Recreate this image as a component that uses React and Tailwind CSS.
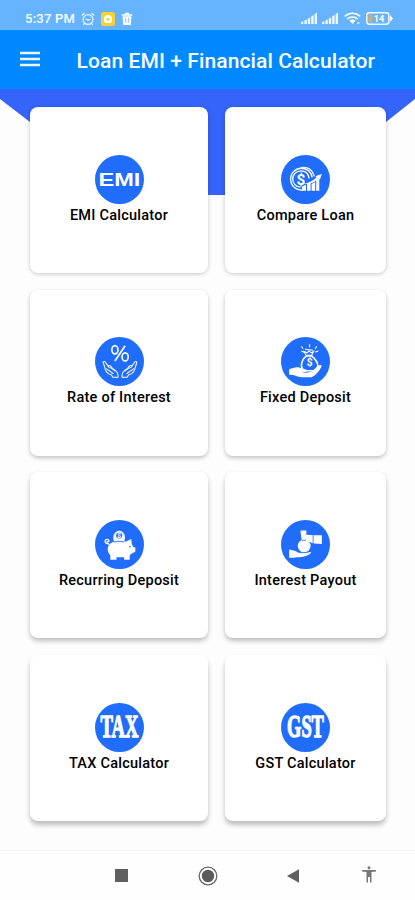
import React from 'react';

const Badge = ({ children }) => (
  <svg width="49" height="49" viewBox="0 0 48 48" className="block" fill="none">
    <circle cx="24" cy="24" r="24" fill="#216dfb" />
    {children}
  </svg>
);

const EmiIcon = () => (
  <Badge>
    <text x="3.500" y="30.300" fontSize="18.500" fontWeight="700" fill="#fff" fontFamily="'Liberation Sans', sans-serif" textLength="41" lengthAdjust="spacingAndGlyphs">EMI</text>
  </Badge>
);

const CompareIcon = () => (
  <Badge>
    <g stroke="#fff" strokeWidth="1.3">
      <path d="M21 34.5C14 34.5 9.500 30 9.500 23.500S14.500 13 20 13c6 0 10 4 10.500 9" />
      <path d="M19 31.500c-4.500-.5-7.500-3.800-7.500-8 0-4.500 3.500-8 8-8s7.500 3 8 7.500" />
      <path d="M19 13c2-1.500 11-2 13.500 8" />
    </g>
    <text x="19.500" y="29" fontSize="15" fontWeight="700" fill="#fff" textAnchor="middle" fontFamily="Roboto, sans-serif">$</text>
    <g fill="#fff">
      <path d="M20.500 35v-4l4-2v6zM25.500 35v-7l3.500-1.500V35zM30 35v-6.500l3.500-2V35zM34.500 35V24.500l3-2.500v13z" />
      <path d="M22 28c5-.5 10-3 13-6.500l-1.500-.8 6.500-2-2 5.500-1.200-1.200C33 27 28 29 22 28z" />
    </g>
  </Badge>
);

const RateIcon = () => (
  <Badge>
    <g stroke="#fff" strokeWidth="1.600">
      <ellipse cx="19.500" cy="12.500" rx="3" ry="4" />
      <ellipse cx="29.500" cy="19.500" rx="3" ry="4" />
      <path d="M29.500 8.500 19.500 23.500" />
    </g>
    <g stroke="#fff" strokeWidth="1" strokeLinejoin="round">
      <path d="M8 24.500c1.500-1 2.500 0 3 1.500l2.500 3.500 3 1.500c4 1.500 6 3.500 6 6.500v2h-5l-1.500-2.500c-3-.5-5-2.500-6-5.500z" />
      <path d="M12.500 28.500c2-1.500 3 0 4 1.500l3 3.500M11 31l7 5" />
      <path d="M41 24.500c-1.500-1-2.500 0-3 1.500l-2.500 3.500-3 1.500c-4 1.500-6 3.500-6 6.500v2h5l1.500-2.500c3-.5 5-2.500 6-5.500z" />
      <path d="M36.500 28.500c-2-1.500-3 0-4 1.500l-3 3.500M38 31l-7 5" />
    </g>
  </Badge>
);

const FixedIcon = () => (
  <Badge>
    <g stroke="#fff" strokeWidth="1">
      <path d="m20 9 1.500 2.500M28 7v3M35 9l-1.500 2.500M20 14l2.500 1M36.500 13.500l-3 1.500M23.500 12l8 1" />
      <path d="m24.500 18-2-4 3 1.500 2-2 2 2 2.500-1.500-2 4z" />
    </g>
    <path d="M25 18.500h5c3.500 3 6 6 6 9.500 0 3-2 4.500-4 5h-9c-2-1-3-2.500-3-5 0-3.500 2-7 5-9.500z" stroke="#fff" strokeWidth="1.500" />
    <text x="28.200" y="28.800" fontSize="10" fontWeight="700" fill="#fff" textAnchor="middle" fontFamily="Roboto, sans-serif">$</text>
    <path d="M8 31.500c3.500-1 6-2.500 9-1.800 2.500.7 3.500 2 6 2 2.500.1 3 2 1.500 2.500l-4 .2c4 1.300 8 .5 11-1.500l5-5c2-1 3.500-.5 3.200 1-1.700 4-5.200 8.100-9.700 10.600H20c-4-.5-7-3-12-2.500z" fill="#fff" />
  </Badge>
);

const PiggyIcon = () => (
  <Badge>
    <path d="M18.500 20.500c-1.800-5 1-10 5.200-10s7 5 5 10z" fill="#fff" />
    <circle cx="23.700" cy="15.300" r="3" fill="#216dfb" />
    <text x="23.700" y="17.600" fontSize="6.500" fontWeight="700" fill="#fff" textAnchor="middle" fontFamily="Roboto, sans-serif">$</text>
    <path d="M14 23.500c-3 .2-4.500-1.500-4-3.200.6-1.800 3.200-1.800 3.600-.3.300 1.400-1.400 2-2.100 1" stroke="#fff" strokeWidth="1.300" />
    <path d="M17.500 21.500c3.500-1.500 9.500-1.500 12.500-.2l5.500-2.800.5 5 1.500 3 2 .5v4l-3 1.500-2.500 2V39h-5.500v-2.500H21V39h-6v-4.500c-3.500-3.500-4-10 2.500-13z" fill="#fff" />
    <path d="M18.500 21.700c3-1.200 7-1.200 10 0" stroke="#216dfb" strokeWidth=".9" />
    <circle cx="34.300" cy="26.300" r=".8" fill="#216dfb" />
  </Badge>
);

const PayoutIcon = () => (
  <Badge>
    <g fill="#fff">
      <path d="M19 10.500c2-.8 4 .2 5.800-.5v4.500L32 15h8v8.500l-8-.5-4-1.500h-3l-1-.5h-3.500z" />
      <circle cx="22.700" cy="25.500" r="6.300" />
      <path d="M8 29c3.500.3 5.500 1.500 8.500 2.500l3.500.5c3.500 0 6.500-.3 9.500-1-.5 2.500-3 3.500-6 4.500-3.500 1.300-8 .5-11 1.500H8z" />
    </g>
    <path d="M31.500 15v8.500M20.500 20l4-.2" stroke="#216dfb" strokeWidth=".8" />
    <path d="M16 31.300c4 1.200 9 1 13-.8" stroke="#216dfb" strokeWidth=".8" />
  </Badge>
);

const TaxIcon = () => (
  <Badge>
    <text x="5.500" y="24" transform="translate(0 -5.600) scale(1 1.620)" fontSize="19.500" fontWeight="700" fill="#fff" stroke="#fff" strokeWidth=".8" fontFamily="'Liberation Serif', serif" textLength="37" lengthAdjust="spacingAndGlyphs">TAX</text>
  </Badge>
);

const GstIcon = () => (
  <Badge>
    <text x="6" y="24" transform="translate(0 -5.600) scale(1 1.620)" fontSize="19.500" fontWeight="700" fill="#fff" stroke="#fff" strokeWidth=".8" fontFamily="'Liberation Serif', serif" textLength="36" lengthAdjust="spacingAndGlyphs">GST</text>
  </Badge>
);

const ROWS = [
  { shadow: 'shadow-[0_1px_4px_rgba(0,0,0,0.22)]', items: [['EMI Calculator', EmiIcon], ['Compare Loan', CompareIcon]] },
  { shadow: 'shadow-[0_2px_4px_rgba(0,0,0,0.24)]', items: [['Rate of Interest', RateIcon], ['Fixed Deposit', FixedIcon]] },
  { shadow: 'shadow-[0_3px_5px_rgba(0,0,0,0.25)]', items: [['Recurring Deposit', PiggyIcon], ['Interest Payout', PayoutIcon]] },
  { shadow: 'shadow-[0_4px_5px_rgba(0,0,0,0.25)]', items: [['TAX Calculator', TaxIcon], ['GST Calculator', GstIcon]] }
];

const Signal = () => (
  <svg width="16" height="13" viewBox="0 0 16 13" fill="#fff" fillOpacity=".9">
    <path d="M0 12v-2l2.400-.8V12zM3.400 12V8.500l2.400-1V12zM6.800 12V6.500l2.400-1V12zM10.200 12V4.300l2.400-1.300v9zM13.600 12V2L16 .5V12z" />
  </svg>
);

function StatusBar() {
  return (
    <div className="h-[30px] bg-[#66b3ff] pt-[7px] pl-[25px] pr-[22px] flex items-center text-white">
      <span className="text-[13px] leading-none font-medium w-[56px] whitespace-nowrap tracking-[0.25px]">5:37 PM</span>
      <svg width="14" height="14" viewBox="0 0 14 14" fill="none" stroke="#fff" strokeOpacity=".85" strokeWidth="1.200">
        <circle cx="7" cy="7.500" r="4.900" />
        <path d="M.8 3.500 3.500 1M13.200 3.500 10.500 1M4.500 6.800 7 8.300l2.500-1M3.500 11.500l-1.200 1.500M10.500 11.500l1.200 1.500" />
      </svg>
      <svg width="14" height="14" viewBox="0 0 14 14" className="ml-[6px]">
        <rect width="14" height="14" rx="2.500" fill="#fad22e" />
        <path d="M4 4.300 5.500 3h3L10 4.300l1 1v4L9.500 11h-5L3 9.300v-4z" fill="#fff" />
        <circle cx="7" cy="7.200" r="1.500" fill="#fad22e" />
      </svg>
      <svg width="12" height="13" viewBox="0 0 12 13" className="ml-[6px]" fill="#fff">
        <path d="M.8 2.200H4V.8h4v1.400h3.200v1.600H.8zM1.500 4.300h9L9.800 13H2.200z" />
        <path d="M4.500 6l.3 5M7.500 6l-.3 5" stroke="#66b3ff" strokeWidth=".8" />
      </svg>
      <div className="ml-auto flex items-center">
        <Signal />
        <span className="w-[5px]" />
        <Signal />
        <svg width="17" height="13" viewBox="0 0 17 13" className="ml-[6px]" fill="none" stroke="#fff" strokeWidth="1.600">
          <path d="M.8 4.300c4.500-4 10.900-4 15.400 0M3.200 7c3-2.600 7.600-2.600 10.600 0" />
          <path d="M5.300 8.600c2-1.500 4.400-1.500 6.400 0L8.500 12z" fill="#fff" stroke="none" />
          <path d="M13 11h2.500" strokeWidth="2" strokeOpacity=".6" />
        </svg>
        <svg width="27" height="13" viewBox="0 0 27 13" className="ml-[5px]">
          <rect x=".8" y=".8" width="22" height="11.400" rx="2.500" fill="none" stroke="#fff" strokeOpacity=".9" strokeWidth="1.500" />
          <path d="M24 3l3 3.500L24 10z" fill="#fff" />
          <rect x="2.500" y="2.500" width="4" height="8" fill="#c9b07a" />
          <text x="13" y="9.800" fontSize="9" fontWeight="700" fill="#fff" textAnchor="middle" fontFamily="Roboto, sans-serif">14</text>
        </svg>
      </div>
    </div>
  );
}

function NavBar() {
  return (
    <div className="h-[50px] border-t border-[#f5f5f5] bg-[#fefefe] flex items-center pl-[115px]">
      <span className="size-[13px] bg-[#5f5f5f]" />
      <svg width="20" height="20" viewBox="0 0 20 20" className="ml-[70px]">
        <circle cx="10" cy="10" r="8.800" fill="none" stroke="#666" strokeWidth="1.300" />
        <circle cx="10" cy="10" r="6.200" fill="#5a5a5a" />
      </svg>
      <svg width="13" height="14" viewBox="0 0 13 14" className="ml-[69px]">
        <path d="M0 7 12 .3v13.400z" fill="#5f5f5f" />
      </svg>
      <svg width="14" height="17" viewBox="0 0 14 17" className="ml-[62px] mb-[2px]" fill="#777">
        <circle cx="7" cy="1.800" r="1.500" />
        <path d="M0 4h14v1.500l-4.500.5v10.500H8V11H6v5.500H4.500V6L0 5.500z" />
      </svg>
    </div>
  );
}

export default function App() {
  return (
    <div className="w-[415px] h-[900px] overflow-hidden bg-[#fdfdfd] flex flex-col font-[Roboto,sans-serif]">
      <StatusBar />
      <header className="h-[59px] bg-[#0088ff] flex items-center pl-5 text-white">
        <svg width="20" height="16" viewBox="0 0 20 16" className="-mt-px" fill="none" stroke="#fff" strokeOpacity=".92" strokeWidth="2.400">
          <path d="M0 2h20M0 8h20M0 14h20" />
        </svg>
        <h1 className="ml-[36.500px] mt-[3px] text-[21px] leading-none font-medium whitespace-nowrap tracking-[0.1px]">Loan EMI + Financial Calculator</h1>
      </header>

      <main className="relative flex-1 pt-[18px] pl-[30px] pr-[29px]">
        {/* Blue backdrop behind the first row of cards */}
        <svg width="415" height="106" viewBox="0 0 415 106" className="absolute left-0 top-0">
          <path d="M0 0h415v10l-29 23-94 73H124L30 33 0 10z" fill="#3564fa" />
        </svg>
        <div className="relative flex flex-col gap-[16.700px]">
          {ROWS.map((row, i) => (
            <div key={i} className="grid grid-cols-[178px_161px] gap-[17px]">
              {row.items.map(([label, Icon]) => (
                <button key={label} className={`h-[166px] rounded-[8px] bg-white flex flex-col items-center pt-[47.500px] ${row.shadow}`}>
                  <Icon />
                  <span className="mt-[3px] text-[14.500px] leading-[18px] font-medium text-black whitespace-nowrap tracking-[0.250px]">{label}</span>
                </button>
              ))}
            </div>
          ))}
        </div>
      </main>

      <NavBar />
    </div>
  );
}
